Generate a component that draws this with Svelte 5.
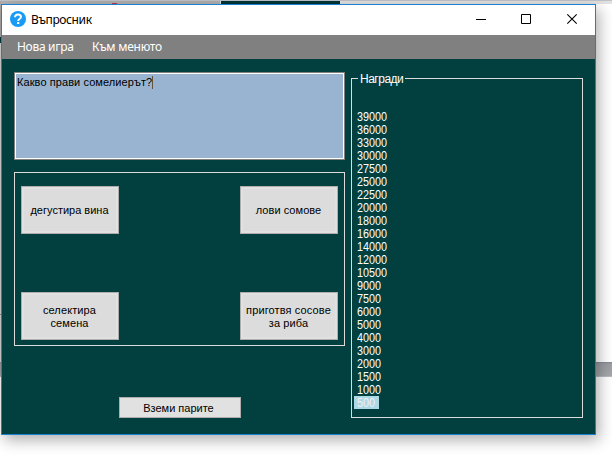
<script>
  const rewards = [39000, 36000, 33000, 30000, 27500, 25000, 22500, 20000, 18000, 16000, 14000, 12000, 10500, 9000, 7500, 6000, 5000, 4000, 3000, 2000, 1500, 1000, 500];
  let current = $state(500);
</script>

<div class="desktop">
  <div class="backdrop">
    <i class="strip"></i><i class="tab"></i><i class="red"></i><i class="tick"></i><i class="line"></i><i class="rail"></i>
  </div>
  <main class="window">
    <header>
      <svg class="logo" width="16" height="16" viewBox="0 0 16 16">
        <circle cx="8" cy="8" r="8" fill="#179bf7" />
        <path d="M5 6.2C5.1 4.2 6.3 3.4 8 3.4s3 .9 3 2.5C11 7.8 8.2 7.7 8.2 10" fill="none" stroke="#fff" stroke-width="2" />
        <rect x="7" y="11" width="2.3" height="2" fill="#fff" />
      </svg>
      <h1>Въпросник</h1>
      <svg class="controls" width="120" height="29" viewBox="0 0 120 29" fill="none" stroke="#000">
        <path d="M4 14.5h10M49.5 9.5h9v9h-9z" />
        <path d="M95.3 9.3l9.4 9.4M104.7 9.3l-9.4 9.4" stroke-width="1.1" />
      </svg>
    </header>
    <nav><span class="new">Нова игра</span><span class="menu">Към менюто</span></nav>
    <div class="content">
      <div class="left">
        <div class="question"><span>Какво прави сомелиерът?</span><i class="caret"></i></div>
        <div class="answers">
          <button><span class="a1">дегустира вина</span></button>
          <button><span class="a2">лови сомове</span></button>
          <button><span class="a3">селектира<br />семена</span></button>
          <button><span class="a4">приготвя сосове<br />за риба</span></button>
        </div>
        <button class="take"><span class="a5">Вземи парите</span></button>
      </div>
      <section class="rewards">
        <h2>Награди</h2>
        <ul>
          {#each rewards as reward}
            <li class:selected={reward === current}><span>{reward}</span></li>
          {/each}
        </ul>
      </section>
    </div>
  </main>
</div>

<style>
  .desktop { position: relative; box-sizing: border-box; width: 612px; height: 459px; padding: 4px 0 0 1px; overflow: hidden; background: #fff; font-family: "Liberation Sans", Arial, sans-serif; }
  .backdrop i { position: absolute; display: block; }
  .strip { left: 0; top: 0; width: 612px; height: 4px; background: linear-gradient(90deg, #b0b0b0 220px, #e2e2e2 220px); border-top: 1px solid #bfc3c9; box-sizing: border-box; }
  .tab { left: 221px; top: 1px; width: 119px; height: 3px; background: #003638; }
  .red { left: 112px; top: 3px; width: 5px; height: 1px; background: #ba3c42; }
  .tick { left: 0; top: 1px; width: 1px; height: 375px; background: linear-gradient(#aaa 36px, #003638 36px, #003638 42px, #d5d5d5 42px); }
  .line { left: 0; top: 314px; width: 1px; height: 1px; background: #888; }
  .rail { left: 0; top: 362px; width: 612px; height: 15px; background: linear-gradient(#858991, #9a9da2 2px, #a5a7aa 14px, #b5bbc2 14px); }
  .window { position: relative; box-sizing: border-box; width: 595px; height: 431px; border: 1px solid #1c80d1; background: #024040; box-shadow: 3px 5px 14px rgba(0, 0, 0, .32); }
  header { height: 30px; display: flex; background: #fff; }
  .logo { margin: 6px 0 0 8px; }
  h1 { margin: 7px 0 0 5px; width: 64px; font: 12px/16px "Noto Sans", sans-serif; letter-spacing: -.38px; white-space: nowrap; }
  .controls { margin: 0 3px 0 auto; }
  nav { height: 24px; display: flex; background: #808080; color: #fff; font: 12px/24px "Noto Sans", sans-serif; }
  nav span { white-space: nowrap; }
  .new { margin-left: 15px; width: 75px; letter-spacing: -.3px; }
  .menu { letter-spacing: -.25px; }
  .content { display: flex; padding: 13px 12px 0; gap: 6px; }
  .left { width: 331px; display: flex; flex-direction: column; }
  .question { box-sizing: border-box; height: 88px; padding: 2px; display: flex; border: 1px solid #808080; box-shadow: inset 0 0 0 1px #fff; background: #99b4d1; font-size: 11px; line-height: 15px; color: #000; }
  .question span { white-space: nowrap; letter-spacing: .08px; }
  .caret { width: 1px; height: 13px; margin-top: 1px; background: #66503a; }
  .answers { box-sizing: border-box; height: 174px; margin-top: 12px; padding: 13px 6px 5px; border: 1px solid #dcdcdc; display: grid; grid-template-columns: 98px 98px; justify-content: space-between; align-content: space-between; }
  button { box-sizing: border-box; height: 48px; padding: 1px 1px 0 0; border: 1px solid #adadad; background: #dcdcdc; box-shadow: inset 0 0 0 2px #e1e1e1; color: #000; font: 11px/13px "Liberation Sans", Arial, sans-serif; white-space: nowrap; display: flex; align-items: center; justify-content: center; }
  .a3, .a4 { padding-top: 1px; letter-spacing: .12px; }
  .a2 { letter-spacing: .05px; }
  .take { width: 122px; height: 21px; padding: 1px 3px 0 0; margin: 51px 0 0 105px; background: #e1e1e1; }
  .rewards { position: relative; box-sizing: border-box; width: 232px; height: 340px; margin-top: 6px; border: 1px solid #dcdcdc; padding: 31px 2px 0; color: #fff; }
  h2 { position: absolute; left: 6px; top: -7px; margin: 0; width: 45px; padding-left: 2px; background: #024040; font: 12px/14px "Liberation Sans", Arial, sans-serif; letter-spacing: -.5px; white-space: nowrap; }
  ul { list-style: none; margin: 0; padding: 0; display: flex; flex-direction: column; align-items: flex-start; font-size: 12px; line-height: 15px; }
  li { height: 13px; padding: 0 5px 0 3px; }
  li span { display: inline-block; transform: scaleX(.9); transform-origin: 0 0; }
  .selected { box-sizing: border-box; width: 25px; background: #add8e6; color: #f0f0f0; }
</style>
